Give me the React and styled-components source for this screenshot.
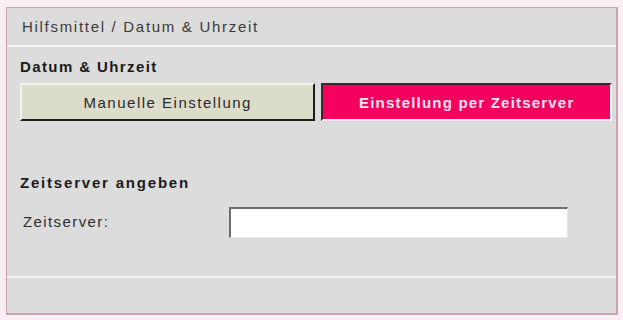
import styled, {createGlobalStyle} from "styled-components";

const Global = createGlobalStyle`
  html, body {
    margin: 0;
    padding: 0;
    background: #f9eff3;
  }
  body {
    font-family: "Liberation Sans", Arial, sans-serif;
  }
`

const Page = styled.div`
  width: 623px;
  height: 320px;
  padding: 7px 5px 5px 6px;
  box-sizing: border-box;
`

const Panel = styled.div`
  height: 308px;
  box-sizing: border-box;
  border: 1px solid #c9a2b5;
  border-right-width: 2px;
  border-bottom-width: 2px;
  background: #dcdcdc;
  display: flex;
  flex-direction: column;
`

const TitleBar = styled.div`
  height: 37px;
  border-bottom: 2px solid #f4f4f4;
  display: flex;
  align-items: center;
  padding: 0 0 0 15px;
  font-size: 15px;
  color: #3a3a3a;
  letter-spacing: 1.7px;
`

const Body = styled.div`
  flex: 1;
  padding: 10px 4px 0 13px;
  display: flex;
  flex-direction: column;
`

const Heading = styled.div`
  font-weight: bold;
  font-size: 15px;
  color: #1a1a1a;
  height: 20px;
  line-height: 20px;
  letter-spacing: ${p => p.$ls || 1.4}px;
  margin-top: ${p => p.$top || 0}px;
`

const Tabs = styled.div`
  display: flex;
  gap: 6px;
  margin-top: 6px;
`

const Tab = styled.div`
  height: 38px;
  box-sizing: border-box;
  display: flex;
  align-items: center;
  justify-content: center;
  font-size: 15px;
  width: ${p => p.$w}px;
  ${p => p.$active ? `
    background: #f5005f;
    color: #f6e4ee;
    font-weight: bold;
    letter-spacing: 1.2px;
    border-top: 2px solid #3a2a30;
    border-left: 2px solid #3a2a30;
    border-right: 2px solid #f3f0f2;
    border-bottom: 2px solid #f3f0f2;
  ` : `
    background: #dcdccb;
    color: #2a2a2a;
    letter-spacing: 1.5px;
    border-top: 2px solid #f2f2ea;
    border-left: 2px solid #f2f2ea;
    border-right: 2px solid #1c1c1c;
    border-bottom: 2px solid #1c1c1c;
  `}
`

const Row = styled.div`
  display: flex;
  align-items: center;
  margin-top: 14px;
`

const Label = styled.div`
  width: 206px;
  padding-left: 3px;
  margin-top: -2px;
  font-size: 15px;
  color: #2e2e2e;
  letter-spacing: 1.4px;
`

const Input = styled.input`
  width: 339px;
  height: 31px;
  box-sizing: border-box;
  background: #ffffff;
  border: none;
  border-top: 2px solid #6e6e6e;
  border-left: 2px solid #6e6e6e;
  border-right: 1px solid #e8e8e8;
  border-bottom: 1px solid #e8e8e8;
  outline: none;
`

const Footer = styled.div`
  height: 35px;
  border-top: 2px solid #f2f2f2;
`

export default function App() {
  return (
    <>
      <Global/>
      <Page>
        <Panel>
          <TitleBar>Hilfsmittel / Datum &amp; Uhrzeit</TitleBar>
          <Body>
            <Heading>Datum &amp; Uhrzeit</Heading>
            <Tabs>
              <Tab $w={297}>Manuelle Einstellung</Tab>
              <Tab $w={292} $active>Einstellung per Zeitserver</Tab>
            </Tabs>
            <Heading $top={52} $ls={1.8}>Zeitserver angeben</Heading>
            <Row>
              <Label>Zeitserver:</Label>
              <Input type="text"/>
            </Row>
          </Body>
          <Footer/>
        </Panel>
      </Page>
    </>
  );
}
